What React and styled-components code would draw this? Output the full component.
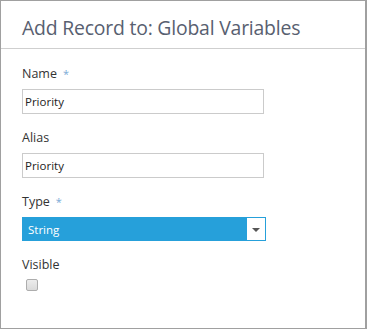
import React from 'react'
import styled, { createGlobalStyle } from 'styled-components'

const GlobalStyle = createGlobalStyle`
html, body {
margin: 0;
padding: 0;
background: #fff;
}
body {
font-family: "Open Sans", "Noto Sans", sans-serif;
}
`

const Dialog = styled.div`
box-sizing: border-box;
width: 367px;
height: 329px;
border: 1px solid #a0a0a0;
border-right-width: 2px;
background: #fff;
display: flex;
flex-direction: column;
`

const Header = styled.div`
height: 48px;
border-bottom: 1px solid #cfcfcf;
display: flex;
align-items: center;
padding: 5px 21px 0;
box-sizing: border-box;
`

const Title = styled.h2`
margin: 0;
font-weight: 400;
font-size: 19.4px;
color: #586070;
letter-spacing: -0.2px;
`

const Body = styled.div`
padding: 15px 20px 0 21px;
display: flex;
flex-direction: column;
`

const Field = styled.div`
display: flex;
flex-direction: column;
margin-bottom: ${({ last }) => (last ? '0' : '14px')};
`

const Label = styled.label`
font-size: 12.5px;
color: #333;
height: 25px;
line-height: 20px;
`

const Required = styled.span`
color: #7aaad6;
margin-left: 6px;
font-size: 11px;
`

const Input = styled.input`
box-sizing: border-box;
width: 242px;
height: 25px;
border: 1px solid #cbcbcb;
padding: 0 2px;
font-family: inherit;
font-size: 11.5px;
color: #222;
outline: none;
`

const Select = styled.div`
box-sizing: border-box;
width: 244px;
height: 24px;
border: 1px solid #26a0da;
background: #26a0da;
display: flex;
align-items: stretch;
`

const SelectValue = styled.div`
flex: 1;
color: #fff;
font-size: 11.5px;
padding-left: 5px;
display: flex;
align-items: center;
`

const SelectButton = styled.div`
width: 18px;
background: #fff;
display: flex;
align-items: center;
justify-content: center;
`

const Arrow = styled.span`
width: 0;
height: 0;
border-left: 4px solid transparent;
border-right: 4px solid transparent;
border-top: 4px solid #555;
margin-top: 1px;
`

const Checkbox = styled.span`
display: block;
box-sizing: border-box;
width: 12px;
height: 12px;
margin: -1px 0 0 4px;
border: 1px solid #adadad;
border-radius: 2px;
background: linear-gradient(#ececec, #dadada);
`

export default function App() {
  return (
    <>
      <GlobalStyle />
      <Dialog>
        <Header>
          <Title>Add Record to: Global Variables</Title>
        </Header>
        <Body>
          <Field>
            <Label>Name<Required>*</Required></Label>
            <Input defaultValue="Priority" />
          </Field>
          <Field>
            <Label>Alias</Label>
            <Input defaultValue="Priority" />
          </Field>
          <Field>
            <Label>Type<Required>*</Required></Label>
            <Select>
              <SelectValue>String</SelectValue>
              <SelectButton><Arrow /></SelectButton>
            </Select>
          </Field>
          <Field last>
            <Label>Visible</Label>
            <Checkbox />
          </Field>
        </Body>
      </Dialog>
    </>
  )
}
